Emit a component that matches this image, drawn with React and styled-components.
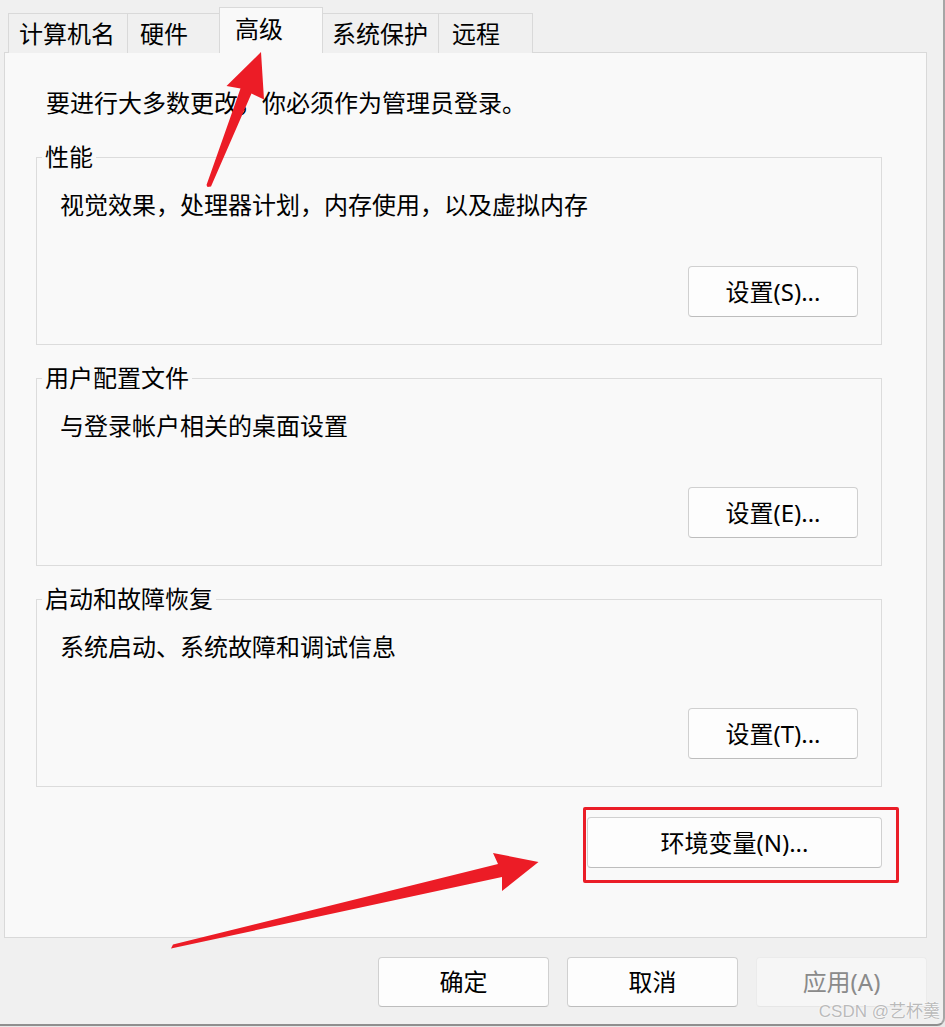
import React from 'react';
import styled, { createGlobalStyle } from 'styled-components';

const Global = createGlobalStyle`
  html, body { margin: 0; padding: 0; background: #e8e8e8; }
  body { font-family: "Noto Sans", "Noto Sans CJK SC", sans-serif; color: #000; }
  * { box-sizing: border-box; }
`;

const Page = styled.div`
  position: relative;
  width: 945px;
  height: 1027px;
  overflow: hidden;
`;

const Window = styled.div`
  width: 945px;
  height: 1026px;
  background: #f0f0f0;
  border-right: 2px solid #a6a6a6;
  border-bottom: 2px solid #8f8f8f;
  border-bottom-right-radius: 8px;
  display: flex;
  flex-direction: column;
`;

const TabBar = styled.div`
  display: flex;
  align-items: flex-end;
  height: 53px;
  padding: 7px 0 0 8px;
  position: relative;
  z-index: 2;
`;

const Tab = styled.div`
  width: ${p => p.$w}px;
  height: ${p => (p.$active ? 46 : 40)}px;
  margin-left: -1px;
  &:first-child { margin-left: 0; }
  padding-left: ${p => p.$pad}px;
  border: 1px solid #d9d9d9;
  border-bottom: none;
  background: ${p => (p.$active ? '#f9f9f9' : '#f0f0f0')};
  font-size: 24px;
  line-height: ${p => (p.$active ? 42 : 39)}px;
  white-space: nowrap;
  position: relative;
  z-index: ${p => (p.$active ? 2 : 1)};
`;

const Panel = styled.div`
  margin: -1px 0 0 4px;
  width: 923px;
  height: 886px;
  background: #f9f9f9;
  border: 1px solid #d9d9d9;
  padding: 35px 44px 0 31px;
  display: flex;
  flex-direction: column;
  position: relative;
  z-index: 1;
`;

const Notice = styled.div`
  font-size: 24px;
  line-height: 30px;
  padding-left: 10px;
  margin-bottom: 24px;
  white-space: nowrap;
`;

const Groups = styled.div`
  display: flex;
  flex-direction: column;
  gap: 18.5px;
`;

const Group = styled.fieldset`
  margin: 0;
  padding: 0;
  min-width: 0;
  border: 1px solid #dcdcdc;
`;

const Legend = styled.legend`
  margin-left: 5px;
  padding: 0 3px;
  font-size: 24px;
  line-height: 30px;
`;

const GroupBody = styled.div`
  padding: 18px 23px 26.5px 23px;
  display: flex;
  flex-direction: column;
`;

const Desc = styled.div`
  font-size: 24px;
  line-height: 30px;
  white-space: nowrap;
`;

const ActionRow = styled.div`
  display: flex;
  justify-content: flex-end;
  margin-top: ${p => p.$mt}px;
`;

const Button = styled.button`
  width: ${p => p.$w}px;
  height: ${p => p.$h}px;
  padding: 0;
  font-family: "Noto Sans", "Noto Sans CJK SC", sans-serif;
  font-size: 24px;
  line-height: 30px;
  color: ${p => (p.disabled ? '#8a8a8a' : '#000')};
  background: ${p => (p.disabled ? '#f6f6f6' : '#fdfdfd')};
  border: 1px solid ${p => (p.disabled ? '#ebebeb' : '#d0d0d0')};
  border-bottom-color: ${p => (p.disabled ? '#e6e6e6' : '#bdbdbd')};
  border-radius: 4px;
  cursor: default;
`;

const Highlight = styled.div`
  position: relative;
  display: flex;
`;

const RedFrame = styled.div`
  position: absolute;
  left: -4px;
  top: -10px;
  right: -17px;
  bottom: -15px;
  border: 3px solid #ea1d27;
  border-radius: 2px;
  pointer-events: none;
`;

const Footer = styled.div`
  width: 927px;
  margin-top: 19px;
  display: flex;
  justify-content: flex-end;
  gap: 18px;
`;

const Overlay = styled.svg`
  position: absolute;
  left: 0;
  top: 0;
  pointer-events: none;
  z-index: 5;
`;

const Watermark = styled.div`
  position: absolute;
  right: 5px;
  bottom: 4px;
  font-family: "Liberation Sans", "Noto Sans CJK SC", sans-serif;
  font-size: 17px;
  line-height: 22px;
  color: #bababa;
  text-shadow: 0 0 2px #fff, 0 0 1px #fff;
  white-space: nowrap;
  z-index: 6;
`;

const tabs = [
  { label: '计算机名', w: 120, pad: 10 },
  { label: '硬件', w: 93, pad: 12 },
  { label: '高级', w: 104, pad: 15, active: true },
  { label: '系统保护', w: 117, pad: 9 },
  { label: '远程', w: 95, pad: 13 },
];

const groups = [
  { title: '性能', desc: '视觉效果，处理器计划，内存使用，以及虚拟内存', btn: '设置(S)...' },
  { title: '用户配置文件', desc: '与登录帐户相关的桌面设置', btn: '设置(E)...' },
  { title: '启动和故障恢复', desc: '系统启动、系统故障和调试信息', btn: '设置(T)...' },
];

export default function App() {
  return (
    <Page>
      <Global />
      <Window>
        <TabBar>
          {tabs.map(t => (
            <Tab key={t.label} $w={t.w} $pad={t.pad} $active={t.active}>
              {t.label}
            </Tab>
          ))}
        </TabBar>
        <Panel>
          <Notice>要进行大多数更改，你必须作为管理员登录。</Notice>
          <Groups>
            {groups.map(g => (
              <Group key={g.title}>
                <Legend>{g.title}</Legend>
                <GroupBody>
                  <Desc>{g.desc}</Desc>
                  <ActionRow $mt={46}>
                    <Button $w={170} $h={51}>{g.btn}</Button>
                  </ActionRow>
                </GroupBody>
              </Group>
            ))}
          </Groups>
          <ActionRow $mt={30.5}>
            <Highlight>
              <Button $w={295} $h={51}>环境变量(N)...</Button>
              <RedFrame />
            </Highlight>
          </ActionRow>
        </Panel>
        <Footer>
          <Button $w={171} $h={50}>确定</Button>
          <Button $w={171} $h={50}>取消</Button>
          <Button $w={171} $h={50} disabled>应用(A)</Button>
        </Footer>
      </Window>
      <Overlay width="945" height="1027" viewBox="0 0 945 1027">
        <polygon
          fill="#ec1c26"
          points="207.5,187 211,186.5 251.5,93.5 264,99.5 261,52 226.5,86 240.5,88.5 206.5,185"
        />
        <polygon
          fill="#ec1c26"
          points="171,948.5 173,944.5 498,864 493,853 538.5,862 502,891 502,877"
        />
      </Overlay>
      <Watermark>CSDN @艺杯羹</Watermark>
    </Page>
  );
}
